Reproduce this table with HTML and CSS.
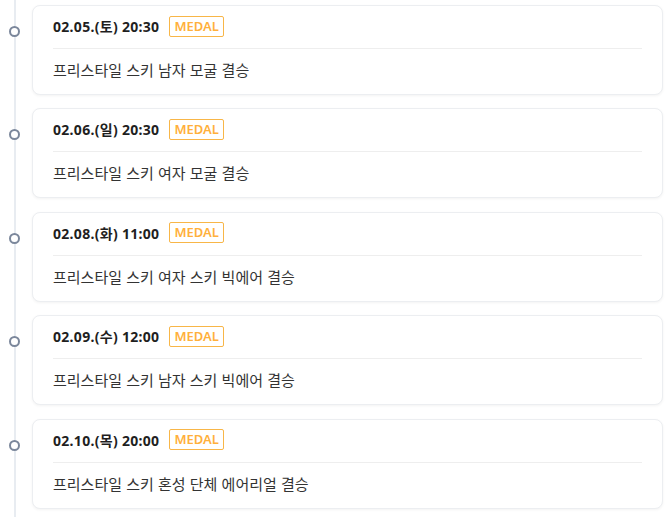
FILE: index.html
```html
<!DOCTYPE html>
<html lang="ko">
<head>
<meta charset="utf-8">
<link rel="stylesheet" href="styles.css">
</head>
<body>
<ul class="timeline">
  <li class="item">
    <span class="dot"></span>
    <div class="card">
      <div class="card-head"><span class="date">02.05.(토) 20:30</span><span class="badge">MEDAL</span></div>
      <div class="card-body">프리스타일 스키 남자 모굴 결승</div>
    </div>
  </li>
  <li class="item">
    <span class="dot"></span>
    <div class="card">
      <div class="card-head"><span class="date">02.06.(일) 20:30</span><span class="badge">MEDAL</span></div>
      <div class="card-body">프리스타일 스키 여자 모굴 결승</div>
    </div>
  </li>
  <li class="item">
    <span class="dot"></span>
    <div class="card">
      <div class="card-head"><span class="date">02.08.(화) 11:00</span><span class="badge">MEDAL</span></div>
      <div class="card-body">프리스타일 스키 여자 스키 빅에어 결승</div>
    </div>
  </li>
  <li class="item">
    <span class="dot"></span>
    <div class="card">
      <div class="card-head"><span class="date">02.09.(수) 12:00</span><span class="badge">MEDAL</span></div>
      <div class="card-body">프리스타일 스키 남자 스키 빅에어 결승</div>
    </div>
  </li>
  <li class="item">
    <span class="dot"></span>
    <div class="card">
      <div class="card-head"><span class="date">02.10.(목) 20:00</span><span class="badge">MEDAL</span></div>
      <div class="card-body">프리스타일 스키 혼성 단체 에어리얼 결승</div>
    </div>
  </li>
</ul>
</body>
</html>
```
FILE: styles.css
```css
html, body {
  margin: 0;
  padding: 0;
  background: #ffffff;
}
body {
  font-family: "Noto Sans CJK KR", "Noto Sans", sans-serif;
  color: #333333;
}
.timeline {
  list-style: none;
  margin: 0;
  padding: 5px 9px 20px 0;
  background: linear-gradient(#e8ecf1, #e8ecf1) no-repeat 14px 0 / 2px 100%;
  min-height: 517px;
  box-sizing: border-box;
  display: flex;
  flex-direction: column;
  gap: 13.4px;
}
.item {
  display: flex;
  align-items: flex-start;
}
.dot {
  flex: none;
  width: 7px;
  height: 7px;
  border: 2px solid #7b879b;
  border-radius: 50%;
  background: #ffffff;
  margin: 21px 12px 0 9px;
}
.card {
  flex: 1;
  border: 1px solid #eceef1;
  border-radius: 8px;
  background: #ffffff;
  box-shadow: 0 1px 3px rgba(0, 0, 0, 0.05);
  padding: 9px 20px 0;
}
.card-head {
  display: flex;
  align-items: center;
  gap: 10px;
  height: 22px;
  padding-bottom: 11px;
  border-bottom: 1px solid #eeeeee;
}
.date {
  font-family: "Noto Sans", "Noto Sans CJK KR", sans-serif;
  font-size: 14px;
  font-weight: 700;
  letter-spacing: 0.3px;
  color: #1f1f1f;
}
.badge {
  font-size: 13px;
  line-height: 19px;
  color: #ffb03c;
  border: 1px solid #f8b648;
  border-radius: 2px;
  padding: 0 4px;
  font-family: "Noto Sans", "Noto Sans CJK KR", sans-serif;
  font-weight: 600;
}
.card-body {
  font-size: 15px;
  line-height: 20px;
  padding: 11px 0 14px;
  color: #333333;
}
```
